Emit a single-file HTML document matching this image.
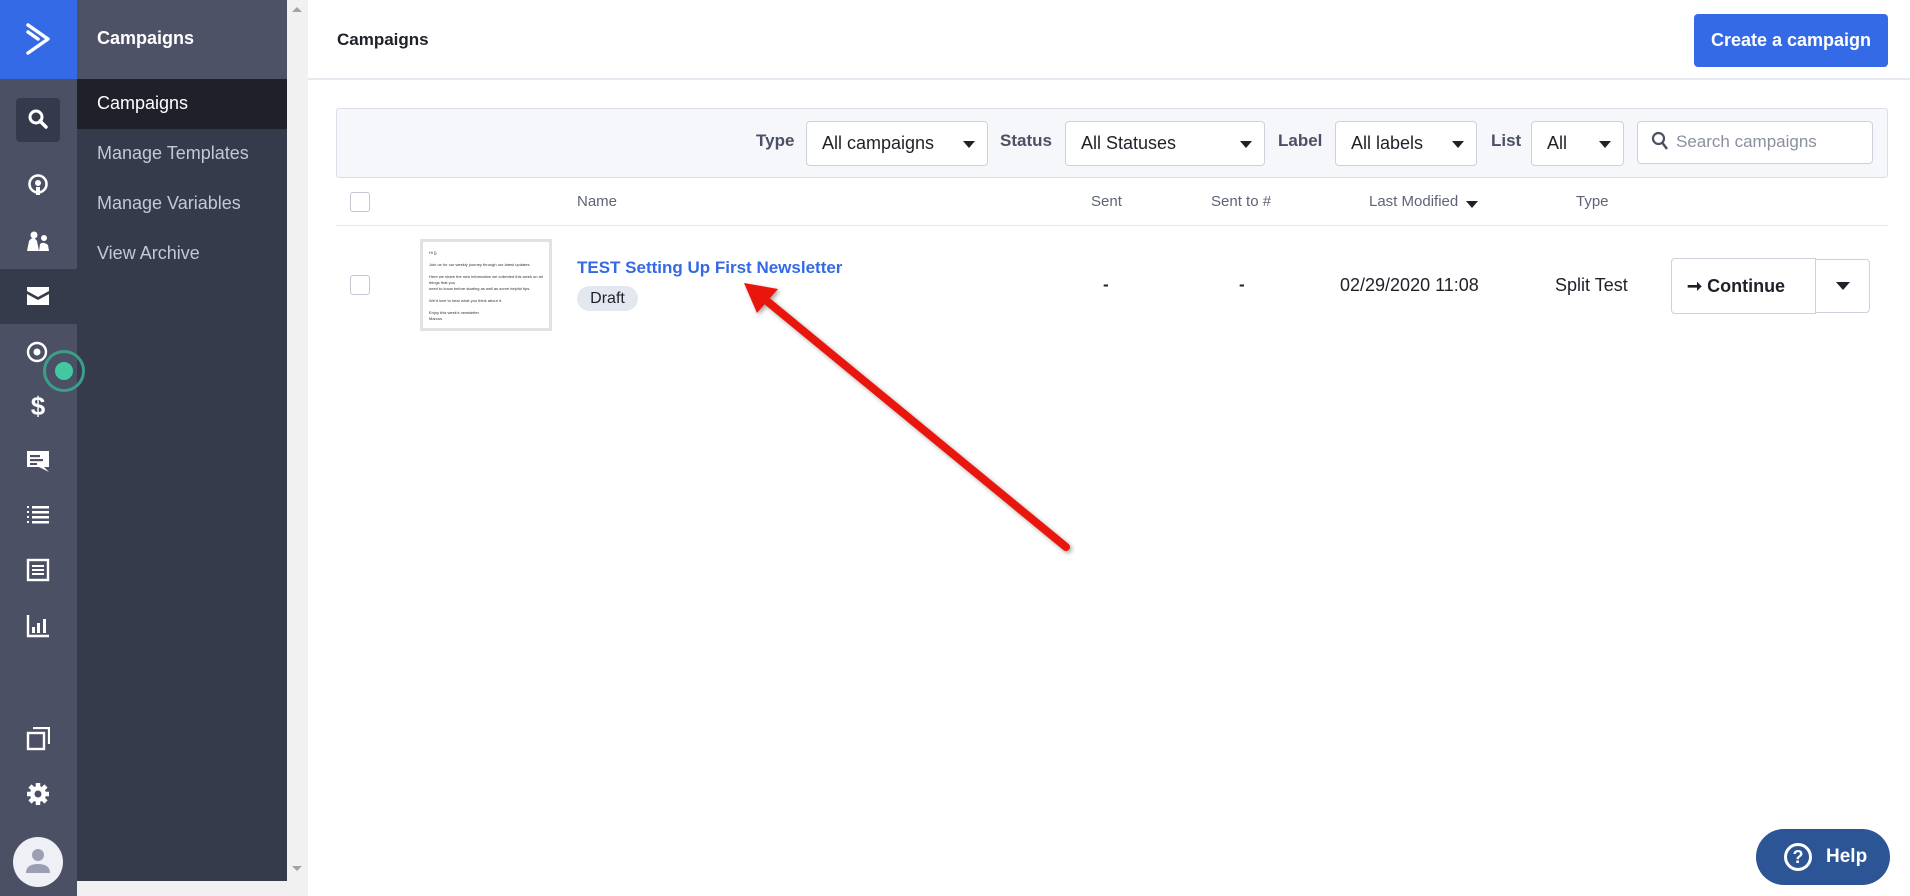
<!DOCTYPE html>
<html><head><meta charset="utf-8"><style>
*{box-sizing:border-box;margin:0;padding:0}
body{width:1910px;height:896px;overflow:hidden;background:#fff;font-family:"Liberation Sans",sans-serif;position:relative;color:#1f2129}
.a{position:absolute}
.rail{left:0;top:0;width:77px;height:896px;background:#4b5064}
.sub{left:77px;top:0;width:210px;height:896px;background:#363b4c}
.ico{position:absolute;left:26px;width:24px;height:24px}
.sel{position:absolute;top:121px;height:45px;background:#fff;border:1px solid #ccd1dc;border-radius:4px;font-size:18px;line-height:43px;padding-left:15px;color:#1f2129}
.sel:after{content:"";position:absolute;right:12px;top:19px;border-left:6px solid transparent;border-right:6px solid transparent;border-top:7px solid #1f2129}
.lbl{position:absolute;top:131px;font-size:17px;font-weight:bold;color:#4b5064}
.th{position:absolute;top:193px;font-size:15px;color:#5e6475}
.cb{position:absolute;left:350px;width:20px;height:20px;border:1px solid #c2c7d2;border-radius:3px;background:#fff}
</style></head><body>
<div class="a rail"></div>
<div class="a" style="left:0;top:0;width:77px;height:79px;background:#356ae6"></div>
<svg class="a" style="left:24px;top:22px" width="30" height="34" viewBox="0 0 30 34"><path d="M4 3 L24 17 L4 31 M4 10 L14 17" fill="none" stroke="#fff" stroke-width="3.5" stroke-linecap="round" stroke-linejoin="round"/></svg>
<div class="a" style="left:16px;top:98px;width:44px;height:44px;background:#343a4c;border-radius:4px"></div>
<svg class="a" style="left:27px;top:108px" width="22" height="22" viewBox="0 0 22 22"><circle cx="9" cy="9" r="6" fill="none" stroke="#fff" stroke-width="3"/><path d="M13 13 L19 19" stroke="#fff" stroke-width="3.5" stroke-linecap="round"/></svg>
<svg class="ico" style="top:173px" viewBox="0 0 24 24"><circle cx="12" cy="11" r="8.5" fill="none" stroke="#fff" stroke-width="2.6"/><circle cx="12" cy="10" r="3" fill="#fff"/><rect x="10" y="14" width="4" height="8" fill="#fff"/></svg>
<svg class="ico" style="top:229px" viewBox="0 0 24 24"><path d="M1 22 L3 12 Q7 6 11 12 L13 22Z M13 22 L14 15 Q17 12 22 16 L23 22Z" fill="#fff"/><circle cx="8" cy="6" r="3.5" fill="#fff"/><circle cx="18" cy="9" r="3" fill="#fff"/></svg>
<div class="a" style="left:0;top:269px;width:77px;height:55px;background:#363b4c"></div>
<svg class="ico" style="top:284px" viewBox="0 0 24 24"><path d="M1 3 H23 V7 L12 13 L1 7Z M1 10 L12 16 L23 10 V21 H1Z" fill="#fff"/></svg>
<svg class="ico" style="top:340px" viewBox="0 0 24 24"><circle cx="11" cy="12" r="9" fill="none" stroke="#fff" stroke-width="2.4"/><circle cx="11" cy="12" r="3.5" fill="#fff"/></svg>
<svg class="ico" style="top:394px" viewBox="0 0 24 24"><text x="12" y="21" text-anchor="middle" font-size="26" font-weight="bold" fill="#fff" font-family="Liberation Sans">$</text></svg>
<svg class="ico" style="top:449px" viewBox="0 0 24 24"><path d="M1 2 H23 V18 H18 L23 23 L13 18 H1Z" fill="#fff"/><rect x="4" y="6" width="10" height="2.2" fill="#4b5064"/><rect x="4" y="10" width="13" height="2.2" fill="#4b5064"/><rect x="4" y="14" width="7" height="2" fill="#4b5064"/></svg>
<svg class="ico" style="top:503px" viewBox="0 0 24 24"><g fill="#fff"><rect x="1" y="3" width="2" height="2"/><rect x="1" y="8" width="2" height="2"/><rect x="1" y="13" width="2" height="2"/><rect x="1" y="18" width="2" height="2"/><rect x="6" y="3" width="17" height="2.5"/><rect x="6" y="8" width="17" height="2.5"/><rect x="6" y="13" width="17" height="2.5"/><rect x="6" y="18" width="17" height="2.5"/></g></svg>
<svg class="ico" style="top:558px" viewBox="0 0 24 24"><rect x="2" y="2" width="20" height="20" fill="none" stroke="#fff" stroke-width="2.4"/><g fill="#fff"><rect x="6" y="7" width="12" height="2"/><rect x="6" y="11" width="12" height="2"/><rect x="6" y="15" width="12" height="2"/></g></svg>
<svg class="ico" style="top:614px" viewBox="0 0 24 24"><path d="M2 1 V22 H23" fill="none" stroke="#fff" stroke-width="2.4"/><g fill="#fff"><rect x="6" y="13" width="3" height="6"/><rect x="11" y="9" width="3" height="10"/><rect x="17" y="5" width="3" height="14"/></g></svg>
<svg class="ico" style="top:727px" viewBox="0 0 24 24"><path d="M7 1 H23 V17" fill="none" stroke="#fff" stroke-width="2.2"/><rect x="2" y="6" width="16" height="16" fill="none" stroke="#fff" stroke-width="2.4"/></svg>
<svg class="ico" style="top:782px" viewBox="0 0 24 24"><circle cx="12" cy="12" r="8" fill="#fff"/><g stroke="#fff" stroke-width="4.5"><path d="M12 1 V23 M1 12 H23 M4 4 L20 20 M20 4 L4 20"/></g><circle cx="12" cy="12" r="3.5" fill="#4b5064"/></svg>
<div class="a" style="left:13px;top:837px;width:50px;height:50px;border-radius:50%;background:#eef0f6"></div>
<svg class="a" style="left:25px;top:847px" width="26" height="28" viewBox="0 0 26 28"><circle cx="13" cy="8" r="6" fill="#9aa0b2"/><path d="M1 26 Q1 17 13 17 Q25 17 25 26Z" fill="#9aa0b2"/></svg>

<div class="a sub"></div>
<div class="a" style="left:77px;top:0;width:210px;height:79px;background:#4d5266"></div>
<div class="a" style="left:97px;top:28px;font-size:18px;font-weight:bold;color:#fff">Campaigns</div>
<div class="a" style="left:77px;top:79px;width:210px;height:50px;background:#1f2029"></div>
<div class="a" style="left:97px;top:93px;font-size:18px;color:#fff">Campaigns</div>
<div class="a" style="left:97px;top:143px;font-size:18px;color:#c4c8d4">Manage Templates</div>
<div class="a" style="left:97px;top:193px;font-size:18px;color:#c4c8d4">Manage Variables</div>
<div class="a" style="left:97px;top:243px;font-size:18px;color:#c4c8d4">View Archive</div>
<div class="a" style="left:77px;top:881px;width:210px;height:15px;background:#f0f0f0"></div>
<div class="a" style="left:287px;top:0;width:21px;height:896px;background:#f1f1f1"></div>
<div class="a" style="left:292px;top:7px;border-left:5px solid transparent;border-right:5px solid transparent;border-bottom:5px solid #a3a3a3"></div>
<div class="a" style="left:292px;top:866px;border-left:5px solid transparent;border-right:5px solid transparent;border-top:5px solid #a3a3a3"></div>

<div class="a" style="left:43px;top:350px;width:42px;height:42px;border-radius:50%;border:3px solid #3a9e8a"></div>
<div class="a" style="left:55px;top:362px;width:18px;height:18px;border-radius:50%;background:#43c9a2"></div>

<div class="a" style="left:337px;top:30px;font-size:17px;font-weight:bold;color:#1f2129">Campaigns</div>
<div class="a" style="left:308px;top:78px;width:1602px;height:2px;background:#e6e9f0"></div>
<div class="a" style="left:1694px;top:14px;width:194px;height:53px;background:#356ae6;border-radius:4px;color:#fff;font-size:18px;font-weight:bold;text-align:center;line-height:53px">Create a campaign</div>

<div class="a" style="left:336px;top:108px;width:1552px;height:70px;background:#f5f7fb;border:1px solid #d9dee8;border-radius:3px"></div>
<div class="lbl" style="left:756px">Type</div>
<div class="sel" style="left:806px;width:182px">All campaigns</div>
<div class="lbl" style="left:1000px">Status</div>
<div class="sel" style="left:1065px;width:200px">All Statuses</div>
<div class="lbl" style="left:1278px">Label</div>
<div class="sel" style="left:1335px;width:142px">All labels</div>
<div class="lbl" style="left:1491px">List</div>
<div class="sel" style="left:1531px;width:93px">All</div>
<div class="a" style="left:1637px;top:121px;width:236px;height:43px;background:#fff;border:1px solid #ccd1dc;border-radius:4px"></div>
<svg class="a" style="left:1651px;top:131px" width="18" height="20" viewBox="0 0 18 20"><circle cx="7.5" cy="7.5" r="5.5" fill="none" stroke="#4b5064" stroke-width="2.2"/><path d="M11.5 12 L16 18" stroke="#4b5064" stroke-width="2.4"/></svg>
<div class="a" style="left:1676px;top:132px;font-size:17px;color:#8a90a0">Search campaigns</div>

<div class="cb" style="top:192px"></div>
<div class="th" style="left:577px">Name</div>
<div class="th" style="left:1091px">Sent</div>
<div class="th" style="left:1211px">Sent to #</div>
<div class="th" style="left:1369px">Last Modified</div>
<div class="a" style="left:1466px;top:201px;border-left:6px solid transparent;border-right:6px solid transparent;border-top:7px solid #1f2129"></div>
<div class="th" style="left:1576px">Type</div>
<div class="a" style="left:336px;top:225px;width:1552px;height:1px;background:#e3e6ee"></div>

<div class="cb" style="top:275px"></div>
<div class="a" style="left:420px;top:239px;width:132px;height:92px;border:3px solid #e2e2e2;background:#fff;padding:8px 6px;font-size:4px;line-height:6px;color:#333">
Hi {}<br><br>Join us for our weekly journey through our latest updates<br><br>Here we share the new information we collected this week on all things that you<br>need to know before starting as well as some helpful tips.<br><br>We'd love to hear what you think about it.<br><br>Enjoy this week's newsletter<br>Marcus</div>
<div class="a" style="left:577px;top:258px;font-size:17px;font-weight:bold;color:#356ae6">TEST Setting Up First Newsletter</div>
<div class="a" style="left:577px;top:286px;width:61px;height:25px;background:#e3e7f0;border-radius:13px;font-size:16px;line-height:25px;text-align:center;color:#1f2129">Draft</div>
<div class="a" style="left:1103px;top:275px;font-size:17px;font-weight:bold">-</div>
<div class="a" style="left:1239px;top:275px;font-size:17px;font-weight:bold">-</div>
<div class="a" style="left:1340px;top:275px;font-size:18px;color:#1f2129">02/29/2020 11:08</div>
<div class="a" style="left:1555px;top:275px;font-size:18px;color:#1f2129">Split Test</div>
<div class="a" style="left:1671px;top:258px;width:145px;height:56px;border:1px solid #ccd1dc;border-radius:4px 0 0 4px;background:#fff"></div>
<div class="a" style="left:1687px;top:276px;font-size:18px;font-weight:bold">➞ Continue</div>
<div class="a" style="left:1815px;top:259px;width:55px;height:54px;border:1px solid #ccd1dc;border-radius:0 4px 4px 0;background:#fff"></div>
<div class="a" style="left:1836px;top:282px;border-left:7px solid transparent;border-right:7px solid transparent;border-top:8px solid #1f2129"></div>

<svg class="a" style="left:0;top:0" width="1910" height="896"><defs><filter id="s"><feDropShadow dx="2" dy="2" stdDeviation="2" flood-opacity="0.35"/></filter></defs>
<g filter="url(#s)"><path d="M1066 547 L762 297" stroke="#e8140f" stroke-width="8" stroke-linecap="round"/><path d="M744 283 L778 289 L757 313Z" fill="#e8140f"/></g></svg>

<div class="a" style="left:1756px;top:829px;width:134px;height:56px;border-radius:28px;background:#2c5595;color:#fff;font-size:19px;font-weight:bold;line-height:56px;padding-left:70px">Help</div>
<div class="a" style="left:1784px;top:843px;width:28px;height:28px;border-radius:50%;border:3px solid #fff;color:#fff;font-size:18px;font-weight:bold;text-align:center;line-height:22px">?</div>
</body></html>
